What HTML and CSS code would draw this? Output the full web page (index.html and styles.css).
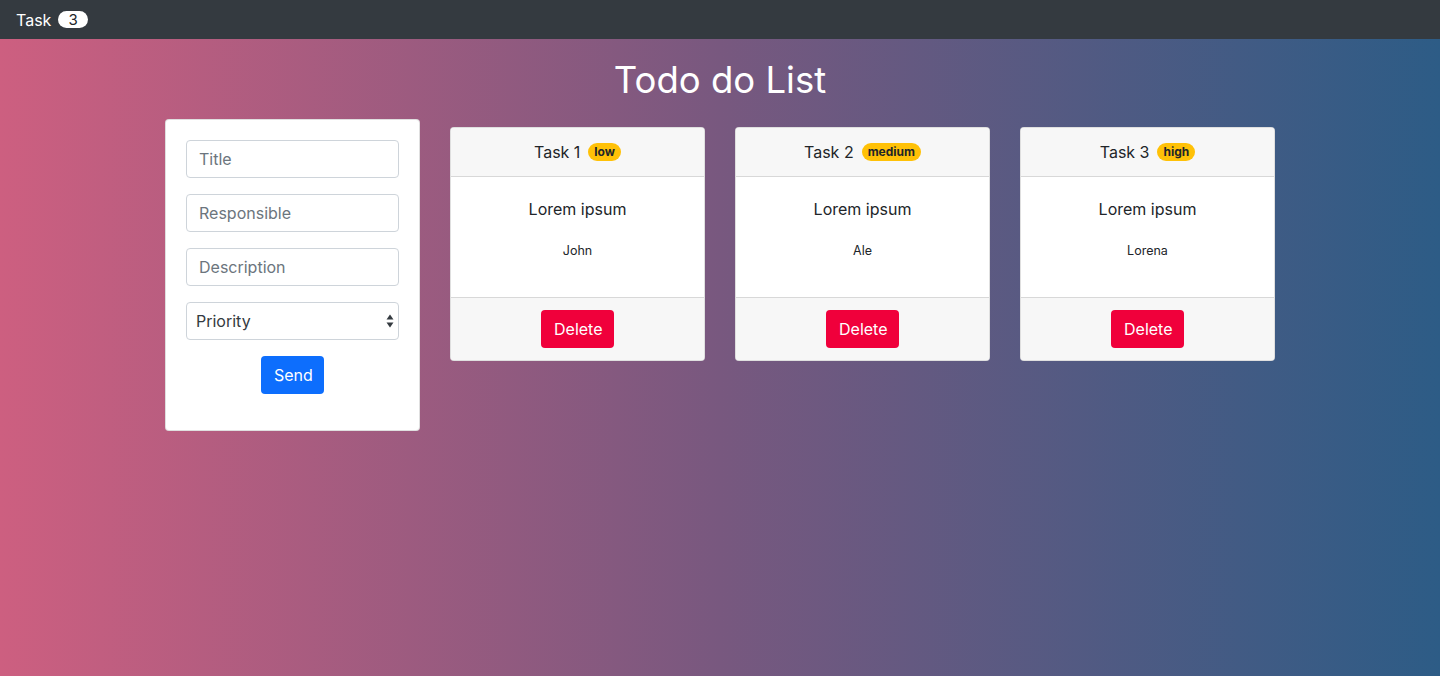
FILE: index.html
```html
<!DOCTYPE html>
<html lang="en">
<head>
<meta charset="utf-8">
<title>Todo do List</title>
<link rel="stylesheet" href="styles.css">
</head>
<body>
<nav class="navbar">
  <span class="brand">Task</span>
  <span class="count-pill">3</span>
</nav>
<main class="container">
  <h1 class="title">Todo do List</h1>
  <div class="board">
    <form class="form-card">
      <input class="field" type="text" placeholder="Title">
      <input class="field" type="text" placeholder="Responsible">
      <input class="field" type="text" placeholder="Description">
      <div class="select-wrap">
        <select class="field select">
          <option>Priority</option>
          <option>low</option>
          <option>medium</option>
          <option>high</option>
        </select>
        <svg class="select-arrows" width="8" height="14" viewBox="0 0 8 14"><path d="M4 0.5 L7.5 5.5 H0.5 Z" fill="#343a40"/><path d="M4 13.5 L7.5 8.5 H0.5 Z" fill="#343a40"/></svg>
      </div>
      <div class="form-actions">
        <button type="button" class="btn btn-send">Send</button>
      </div>
    </form>

    <article class="task-card">
      <header class="task-head">Task 1 <span class="prio">low</span></header>
      <div class="task-body">
        <p class="task-desc">Lorem ipsum</p>
        <p class="task-owner">John</p>
      </div>
      <footer class="task-foot"><button type="button" class="btn btn-delete">Delete</button></footer>
    </article>

    <article class="task-card">
      <header class="task-head">Task 2 <span class="prio">medium</span></header>
      <div class="task-body">
        <p class="task-desc">Lorem ipsum</p>
        <p class="task-owner">Ale</p>
      </div>
      <footer class="task-foot"><button type="button" class="btn btn-delete">Delete</button></footer>
    </article>

    <article class="task-card">
      <header class="task-head">Task 3 <span class="prio">high</span></header>
      <div class="task-body">
        <p class="task-desc">Lorem ipsum</p>
        <p class="task-owner">Lorena</p>
      </div>
      <footer class="task-foot"><button type="button" class="btn btn-delete">Delete</button></footer>
    </article>
  </div>
</main>
</body>
</html>
```

FILE: styles.css
```css
* { box-sizing: border-box; }

html, body {
  margin: 0;
  padding: 0;
  height: 100%;
}

body {
  font-family: Inter, "Noto Sans", "Liberation Sans", sans-serif;
  font-size: 16px;
  line-height: 1.5;
  color: #212529;
  background: linear-gradient(to right, #cd5f80 0%, #78587f 50%, #2d5c86 100%);
  min-height: 676px;
}

.navbar {
  height: 39px;
  background: #343a40;
  display: flex;
  align-items: center;
  padding: 0 16px;
  gap: 7px;
  color: #fff;
}

.brand {
  font-size: 16px;
  line-height: 1;
}

.count-pill {
  background: #fff;
  color: #212529;
  border-radius: 9px;
  font-size: 15px;
  line-height: 17px;
  height: 17px;
  padding: 0 10px;
}

.container {
  width: 1110px;
  margin: 0 auto;
}

.title {
  margin: 0;
  padding: 16px 0 14px;
  text-align: center;
  color: #fff;
  font-size: 36.5px;
  font-weight: 400;
  line-height: 50px;
}

.board {
  display: grid;
  grid-template-columns: repeat(4, 255px);
  column-gap: 30px;
  align-items: start;
}

.form-card {
  background: #fff;
  border: 1px solid rgba(0,0,0,.125);
  border-radius: 4px;
  padding: 20px 20px 20px;
  display: flex;
  flex-direction: column;
}

.field {
  display: block;
  width: 100%;
  height: 38px;
  padding: 6px 12px;
  margin: 0 0 16px;
  font-family: inherit;
  font-size: 16px;
  line-height: 24px;
  color: #495057;
  background: #fff;
  border: 1px solid #ced4da;
  border-radius: 4px;
  outline: none;
}

.field::placeholder { color: #6c757d; }

.select-wrap {
  position: relative;
}

.select {
  appearance: none;
  -webkit-appearance: none;
  padding-left: 9px;
  color: #343a40;
}

.select-arrows {
  position: absolute;
  right: 5px;
  top: 12px;
  pointer-events: none;
}

.form-actions {
  display: flex;
  justify-content: center;
  margin-bottom: 16px;
}

.btn {
  font-family: inherit;
  font-size: 16px;
  line-height: 24px;
  height: 38px;
  padding: 6px 12px;
  border: 1px solid transparent;
  border-radius: 4px;
  color: #fff;
  cursor: pointer;
}

.btn-send {
  background: #0d6efd;
  width: 63px;
}

.btn-delete {
  background: #f0003b;
  width: 73px;
}

.task-card {
  margin-top: 8px;
  background: #fff;
  border: 1px solid rgba(0,0,0,.125);
  border-radius: 4px;
  overflow: hidden;
  text-align: center;
}

.task-head {
  background: #f7f7f7;
  padding: 12px 16px;
  line-height: 24px;
  border-bottom: 1px solid rgba(0,0,0,.125);
  display: flex;
  justify-content: center;
  align-items: center;
  gap: 8px;
}

.prio {
  background: #ffc107;
  color: #212529;
  font-size: 12px;
  font-weight: 700;
  line-height: 18px;
  padding: 0 6px;
  border-radius: 9px;
}

.task-body {
  padding: 20px 20px 18px;
  height: 120px;
}

.task-desc {
  margin: 0 0 20px;
  line-height: 24px;
}

.task-owner {
  margin: 0;
  font-size: 12.5px;
  line-height: 20px;
}

.task-foot {
  background: #f7f7f7;
  border-top: 1px solid rgba(0,0,0,.125);
  padding: 12px;
  display: flex;
  justify-content: center;
}
```
